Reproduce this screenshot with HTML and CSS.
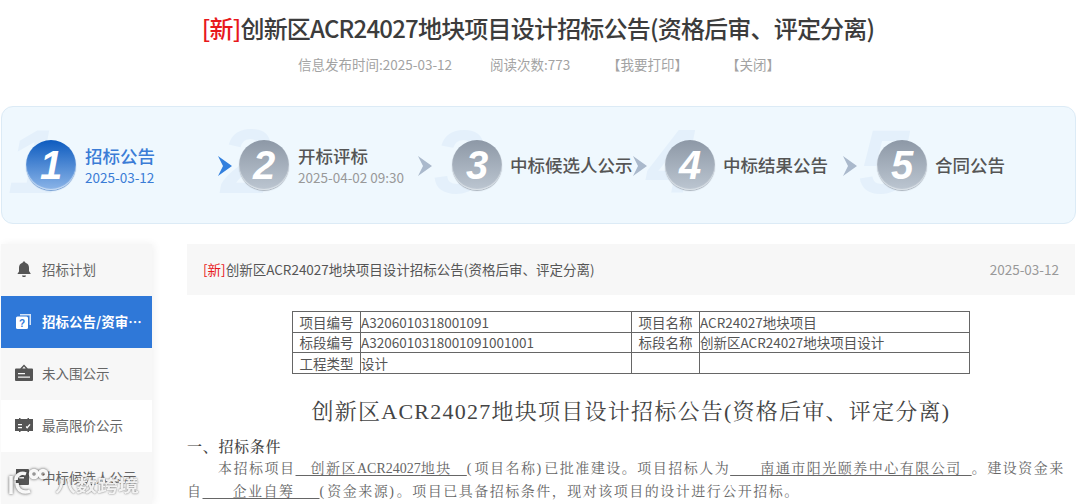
FILE: index.html
```html
<!DOCTYPE html>
<html lang="zh-CN">
<head>
<meta charset="utf-8">
<title>招标公告</title>
<link rel="stylesheet" href="styles.css">
</head>
<body>
<header class="head">
  <h1 class="title"><span class="new">[新]</span>创新区ACR24027地块项目设计招标公告(资格后审、评定分离)</h1>
  <div class="meta">
    <span class="m1">信息发布时间:2025-03-12</span>
    <span class="m2">阅读次数:773</span>
    <span class="m3">【我要打印】</span>
    <span class="m4">【关闭】</span>
  </div>
</header>

<section class="steps">
  <div class="step s1 active">
    <span class="ghost">1</span><span class="ball">1</span>
    <div class="lbl"><b>招标公告</b><small>2025-03-12</small></div>
  </div>
  <svg class="chev c1 blue" viewBox="0 0 16 20"><path d="M1 0 L15 10 L1 20 L6 10Z"/></svg>
  <div class="step s2">
    <span class="ghost">2</span><span class="ball">2</span>
    <div class="lbl"><b>开标评标</b><small>2025-04-02 09:30</small></div>
  </div>
  <svg class="chev c2" viewBox="0 0 16 20"><path d="M1 0 L15 10 L1 20 L6 10Z"/></svg>
  <div class="step s3">
    <span class="ghost">3</span><span class="ball">3</span>
    <div class="lbl"><b>中标候选人公示</b></div>
  </div>
  <svg class="chev c3" viewBox="0 0 16 20"><path d="M1 0 L15 10 L1 20 L6 10Z"/></svg>
  <div class="step s4">
    <span class="ghost">4</span><span class="ball">4</span>
    <div class="lbl"><b>中标结果公告</b></div>
  </div>
  <svg class="chev c4" viewBox="0 0 16 20"><path d="M1 0 L15 10 L1 20 L6 10Z"/></svg>
  <div class="step s5">
    <span class="ghost">5</span><span class="ball">5</span>
    <div class="lbl"><b>合同公告</b></div>
  </div>
</section>

<div class="body">
  <nav class="side">
    <a class="item">
      <svg class="ico" viewBox="0 0 18 18"><path d="M9 1.500c.8 0 1.300.5 1.400 1.200 2.400.6 3.600 2.600 3.600 5v3.300l1.600 2.400v.6H2.400V14L4 11.600V7.700c0-2.400 1.200-4.400 3.600-5C7.700 2 8.200 1.500 9 1.500zM7 15.500h4c0 1-.9 1.500-2 1.500s-2-.5-2-1.500z"/></svg>
      <span>招标计划</span>
    </a>
    <a class="item on">
      <svg class="ico" viewBox="0 0 18 18"><path class="ol" d="M5 3.500V2h11v11h-1.500V3.500z"/><rect x="1" y="4.500" width="12" height="12.500" rx="1.500"/><text class="qm" x="7" y="14.500">?</text></svg>
      <span>招标公告/资审…</span>
    </a>
    <a class="item">
      <svg class="ico" viewBox="0 0 18 18"><path d="M9 .5l3.800 4H17a1 1 0 0 1 1 1V16a1 1 0 0 1-1 1H1a1 1 0 0 1-1-1V5.500a1 1 0 0 1 1-1h4.200zM9 2.400 7.300 4.500h3.400zM3 9v1.300h7V9zm0 3.500v1.300h12v-1.300z" fill-rule="evenodd"/></svg>
      <span>未入围公示</span>
    </a>
    <a class="item white">
      <svg class="ico" viewBox="0 0 18 18"><path d="M0 3h4v-1h1.500v1h7v-1H14v1h4v12h-4v1h-1.500v-1h-7v1H4v-1H0zM3 8v1.300h4V8zm0 3v1.300h4V11zm8 .5 1.200 1.200 3.300-4-1-.8-2.400 2.900-1.200-1z" fill-rule="evenodd"/></svg>
      <span>最高限价公示</span>
    </a>
    <a class="item">
      <svg class="ico" viewBox="0 0 18 18"><path d="M1 1h12a1 1 0 0 1 1 1v14a1 1 0 0 1-1 1H1zM4 5v1.500h7V5zm0 4v1.500h5V9z" fill-rule="evenodd"/></svg>
      <span>中标候选人公示</span>
    </a>
  </nav>

  <main class="main">
    <div class="bar">
      <span class="bar-t"><span class="new">[新]</span>创新区ACR24027地块项目设计招标公告(资格后审、评定分离)</span>
      <span class="bar-d">2025-03-12</span>
    </div>
    <table class="info">
      <colgroup><col class="c-a"><col class="c-b"><col class="c-c"><col class="c-d"></colgroup>
      <tr><td class="k">项目编号</td><td>A3206010318001091</td><td class="k">项目名称</td><td>ACR24027地块项目</td></tr>
      <tr><td class="k">标段编号</td><td>A3206010318001091001001</td><td class="k">标段名称</td><td>创新区ACR24027地块项目设计</td></tr>
      <tr><td class="k">工程类型</td><td>设计</td><td></td><td></td></tr>
    </table>
    <h2 class="doc-title">创新区ACR24027地块项目设计招标公告(资格后审、评定分离)</h2>
    <h3 class="sec">一、招标条件</h3>
    <p class="para">本招标项目<u>&nbsp;&nbsp;&nbsp;创新区<span class="la">ACR24027</span>地块&nbsp;&nbsp;&nbsp;</u><span class="pn">(</span>项目名称<span class="pn">)</span>已批准建设。项目招标人为<u>&nbsp;&nbsp;&nbsp;&nbsp;&nbsp;&nbsp;南通市阳光颐养中心有限公司&nbsp;&nbsp;</u>。建设资金来自<u>&nbsp;&nbsp;&nbsp;&nbsp;&nbsp;&nbsp;企业自筹&nbsp;&nbsp;&nbsp;&nbsp;&nbsp;</u><span class="pn">(</span>资金来源<span class="pn">)</span>。项目已具备招标条件，现对该项目的设计进行公开招标。</p>
  </main>
</div>

<div class="mark">
  <svg class="mark-i" viewBox="0 0 46 30"><path d="M3 8v18M8 12c0-5 5-8 10-6M9 15c0 7 6 11 13 8"/><circle cx="26" cy="6" r="3.500"/><circle cx="35" cy="6" r="3.500"/></svg>
  <span class="mark-t">八数跨境</span>
</div>
</body>
</html>
```
FILE: styles.css
```css
* { box-sizing: border-box; }
html, body { margin: 0; padding: 0; }
body {
  width: 1080px; height: 504px; overflow: hidden; background: #fff; position: relative;
  font-family: "Noto Sans CJK SC", "Noto Sans", sans-serif; color: #555;
}
.head { text-align: center; height: 106px; padding-top: 12px; }
.title { margin: 0; padding-right: 4px; font-size: 24px; line-height: 32px; font-weight: 500; color: #3c3c3c; letter-spacing: -.8px; }
.new { color: #e8181c; }
.meta { display: flex; margin-top: 10px; padding-left: 298px; font-size: 13.500px; line-height: 20px; color: #a3a3a3; text-align: left; }
.m1 { width: 192px; } .m2 { width: 117px; } .m3 { width: 119px; }

.steps {
  position: relative; height: 118px; margin: 0 4px 0 1px;
  background: #eff8fe; border: 1px solid #dcebf6; border-radius: 12px;
}
.step { position: absolute; top: 32px; display: flex; align-items: center; height: 52px; }
.s1 { left: 24px; } .s2 { left: 237px; } .s3 { left: 450px; } .s4 { left: 663px; } .s5 { left: 875px; }
.s3 .lbl, .s4 .lbl, .s5 .lbl { margin-left: -1px; }
.ghost {
  position: absolute; left: -18px; top: -17px; font: italic 700 90px/80px "Liberation Sans Narrow", "Liberation Sans", sans-serif; color: #e4f0fb;
}
.ball {
  position: relative; width: 50px; height: 50px; border-radius: 50%; margin-right: 9px; flex: none; text-align: center;
  font: italic 700 40px/50px "Liberation Sans Narrow", "Liberation Sans", sans-serif; color: #fff;
  background: linear-gradient(#8d98a6, #bcc6d1); box-shadow: inset 0 -1px 1px #dfe5ea, 0 1px 1px #a9b2bc;
}
.active .ball { background: linear-gradient(#0d5bbf, #8cb5e8); box-shadow: inset 0 -1px 1px #cfe0f5, 0 1px 1px #6f9ad0; }
.lbl { position: relative; display: flex; flex-direction: column; }
.lbl b { font-size: 17.500px; line-height: 24px; font-weight: 500; color: #555; white-space: nowrap; }
.lbl small { font-size: 13.500px; line-height: 18px; color: #999; white-space: nowrap; }
.active .lbl b, .active .lbl small { color: #3a7cd6; }
.chev { position: absolute; top: 49px; width: 16px; height: 20px; fill: #aab9cc; }
.chev.blue { fill: #3380de; }
.c1 { left: 215px; } .c2 { left: 415px; } .c3 { left: 630px; } .c4 { left: 840px; }

.body { display: flex; margin-top: 20px; }
.side { width: 151px; margin-left: 1px; flex: none; box-shadow: 2px 0 8px rgba(0,0,0,.06); }
.item { display: flex; align-items: center; height: 52px; padding: 0 0 2px 14px; background: #f7f7f7; font-size: 13.500px; color: #666; white-space: nowrap; }
.item .ico { width: 18px; height: 18px; margin-right: 9px; fill: #555; flex: none; }
.item.on { background: #2f78d8; color: #fff; font-weight: 700; }
.item.on .ico { fill: #fff; }
.item.white { background: #fff; }
.ol { opacity: .8; }
.qm { font: 700 10px "Liberation Sans", sans-serif; fill: #2f78d8; text-anchor: middle; }

.main { margin-left: 35px; width: 888px; flex: none; }
.bar { display: flex; justify-content: space-between; align-items: center; height: 51px; padding: 0 16px 2px; background: #f7f7f7; font-size: 13.500px; color: #555; }
.bar-d { color: #999; }
.info { border-collapse: collapse; margin: 16px 0 0 105px; width: 678px; table-layout: fixed; font-size: 13.500px; line-height: 18px; color: #555; }
.info td { border: 1px solid #666; padding: 0; height: 20.500px; white-space: nowrap; }
.c-a { width: 68px; } .c-b { width: 271px; } .c-c { width: 68px; }
.info td.k { text-align: center; }
.doc-title { margin: 23px 0 0; text-align: center; font: 400 22px/30px "Liberation Serif", "Noto Serif CJK SC", "Noto Sans CJK SC", serif; letter-spacing: 1.250px; color: #444; }
.sec { margin: 10px 0 0; font: 500 15px/20px "Liberation Serif", "Noto Serif CJK SC", "Noto Sans CJK SC", serif; color: #444; letter-spacing: .7px; }
.para { margin: 0; text-indent: 31px; font: 400 14px/23px "Liberation Serif", "Noto Serif CJK SC", "Noto Sans CJK SC", serif; color: #666; letter-spacing: 1.500px; }
.para u { text-underline-offset: 2px; }
.la { letter-spacing: 0; }
.pn { letter-spacing: 3px; }

.mark { position: absolute; left: 8px; top: 468px; display: flex; align-items: center; color: rgba(255,255,255,.9); }
.mark-t { font-size: 21px; line-height: 24px; font-weight: 700; margin: 4px 0 0 1px; transform: scaleY(.8); text-shadow: 0 0 2px rgba(50,50,50,.8); }
.mark-i { width: 46px; height: 30px; fill: none; stroke: rgba(255,255,255,.95); stroke-width: 3.500; filter: drop-shadow(0 0 1.500px rgba(50,50,50,.9)); }
```
